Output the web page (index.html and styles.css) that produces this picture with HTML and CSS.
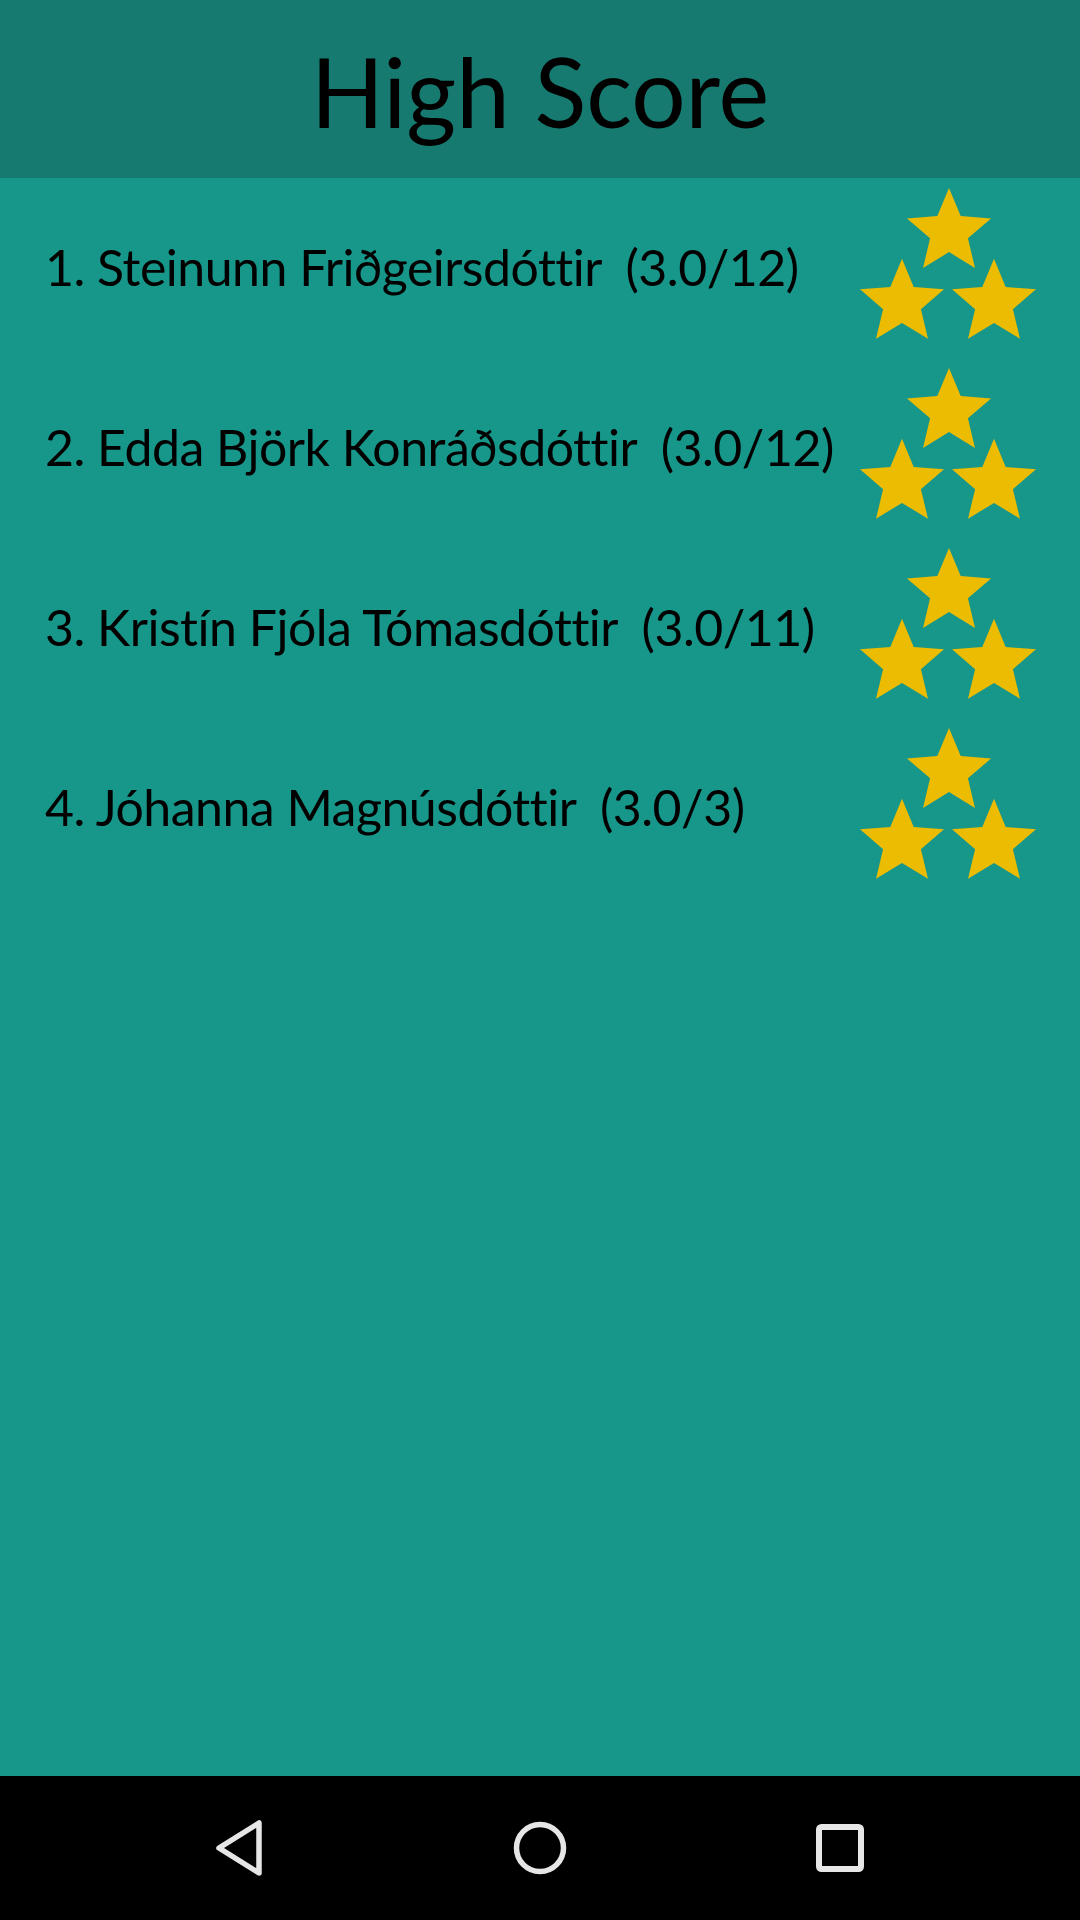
FILE: index.html
```html
<!DOCTYPE html>
<html lang="is">
<head>
<meta charset="utf-8">
<title>High Score</title>
<link rel="stylesheet" href="styles.css">
</head>
<body>
<div class="screen">
  <header class="topbar"><h1 class="title">High Score</h1></header>
  <main class="list">
    <div class="row">
      <span class="entry">1. Steinunn Friðgeirsdóttir  (3.0/12)</span>
      <svg class="stars" viewBox="0 0 176 151" aria-hidden="true">
        <use href="#star" x="89" y="44.2"/>
        <use href="#star" x="42" y="115"/>
        <use href="#star" x="134" y="115"/>
      </svg>
    </div>
    <div class="row">
      <span class="entry">2. Edda Björk Konráðsdóttir  (3.0/12)</span>
      <svg class="stars" viewBox="0 0 176 151" aria-hidden="true">
        <use href="#star" x="89" y="44.2"/>
        <use href="#star" x="42" y="115"/>
        <use href="#star" x="134" y="115"/>
      </svg>
    </div>
    <div class="row">
      <span class="entry">3. Kristín Fjóla Tómasdóttir  (3.0/11)</span>
      <svg class="stars" viewBox="0 0 176 151" aria-hidden="true">
        <use href="#star" x="89" y="44.2"/>
        <use href="#star" x="42" y="115"/>
        <use href="#star" x="134" y="115"/>
      </svg>
    </div>
    <div class="row">
      <span class="entry">4. Jóhanna Magnúsdóttir  (3.0/3)</span>
      <svg class="stars" viewBox="0 0 176 151" aria-hidden="true">
        <use href="#star" x="89" y="44.2"/>
        <use href="#star" x="42" y="115"/>
        <use href="#star" x="134" y="115"/>
      </svg>
    </div>
  </main>
  <nav class="navbar">
    <svg class="nav-icon" viewBox="0 0 60 60" aria-hidden="true">
      <path d="M50 5 L50 55 L10 30 Z" fill="none" stroke="#e6e6e6" stroke-width="5.5" stroke-linejoin="round"/>
    </svg>
    <svg class="nav-icon" viewBox="0 0 60 60" aria-hidden="true">
      <circle cx="30" cy="30" r="23.5" fill="none" stroke="#e6e6e6" stroke-width="5.5"/>
    </svg>
    <svg class="nav-icon" viewBox="0 0 60 60" aria-hidden="true">
      <rect x="9" y="9" width="42" height="42" rx="2.5" fill="none" stroke="#e6e6e6" stroke-width="6"/>
    </svg>
  </nav>
</div>
<svg width="0" height="0" class="defs" aria-hidden="true">
  <defs>
    <polygon id="star" fill="#ebbc02" transform="scale(0.884)" points="0,-50 13.23,-18.2 47.55,-15.45 21.4,6.95 29.39,40.45 0,22.5 -29.39,40.45 -21.4,6.95 -47.55,-15.45 -13.23,-18.2"/>
  </defs>
</svg>
</body>
</html>
```
FILE: styles.css
```css
html, body {
  margin: 0;
  padding: 0;
}
body {
  width: 1080px;
  height: 1920px;
  overflow: hidden;
  font-family: Lato, "Open Sans", sans-serif;
  color: #000;
}
.screen {
  display: flex;
  flex-direction: column;
  height: 1920px;
  background: #17968a;
}
.topbar {
  height: 178px;
  background: #167a70;
  display: flex;
  align-items: center;
  justify-content: center;
}
.title {
  margin: 0;
  font-weight: 400;
  font-size: 96px;
  line-height: 1;
  padding-top: 4px;
}
.list {
  flex: 1;
  padding: 10px 44px 0 45px;
  display: flex;
  flex-direction: column;
  gap: 29px;
}
.row {
  display: grid;
  grid-template-columns: 1fr 176px;
  align-items: center;
  height: 151px;
}
.entry {
  white-space: pre;
  font-size: 50px;
  font-weight: 400;
  letter-spacing: -0.5px;
  line-height: 1;
  padding-top: 6px;
}
.stars {
  width: 176px;
  height: 151px;
}
.defs {
  position: absolute;
}
.navbar {
  height: 144px;
  background: #000;
  display: flex;
  align-items: center;
  justify-content: space-between;
  padding: 0 210px 0 209px;
}
.nav-icon {
  width: 60px;
  height: 60px;
}
```
